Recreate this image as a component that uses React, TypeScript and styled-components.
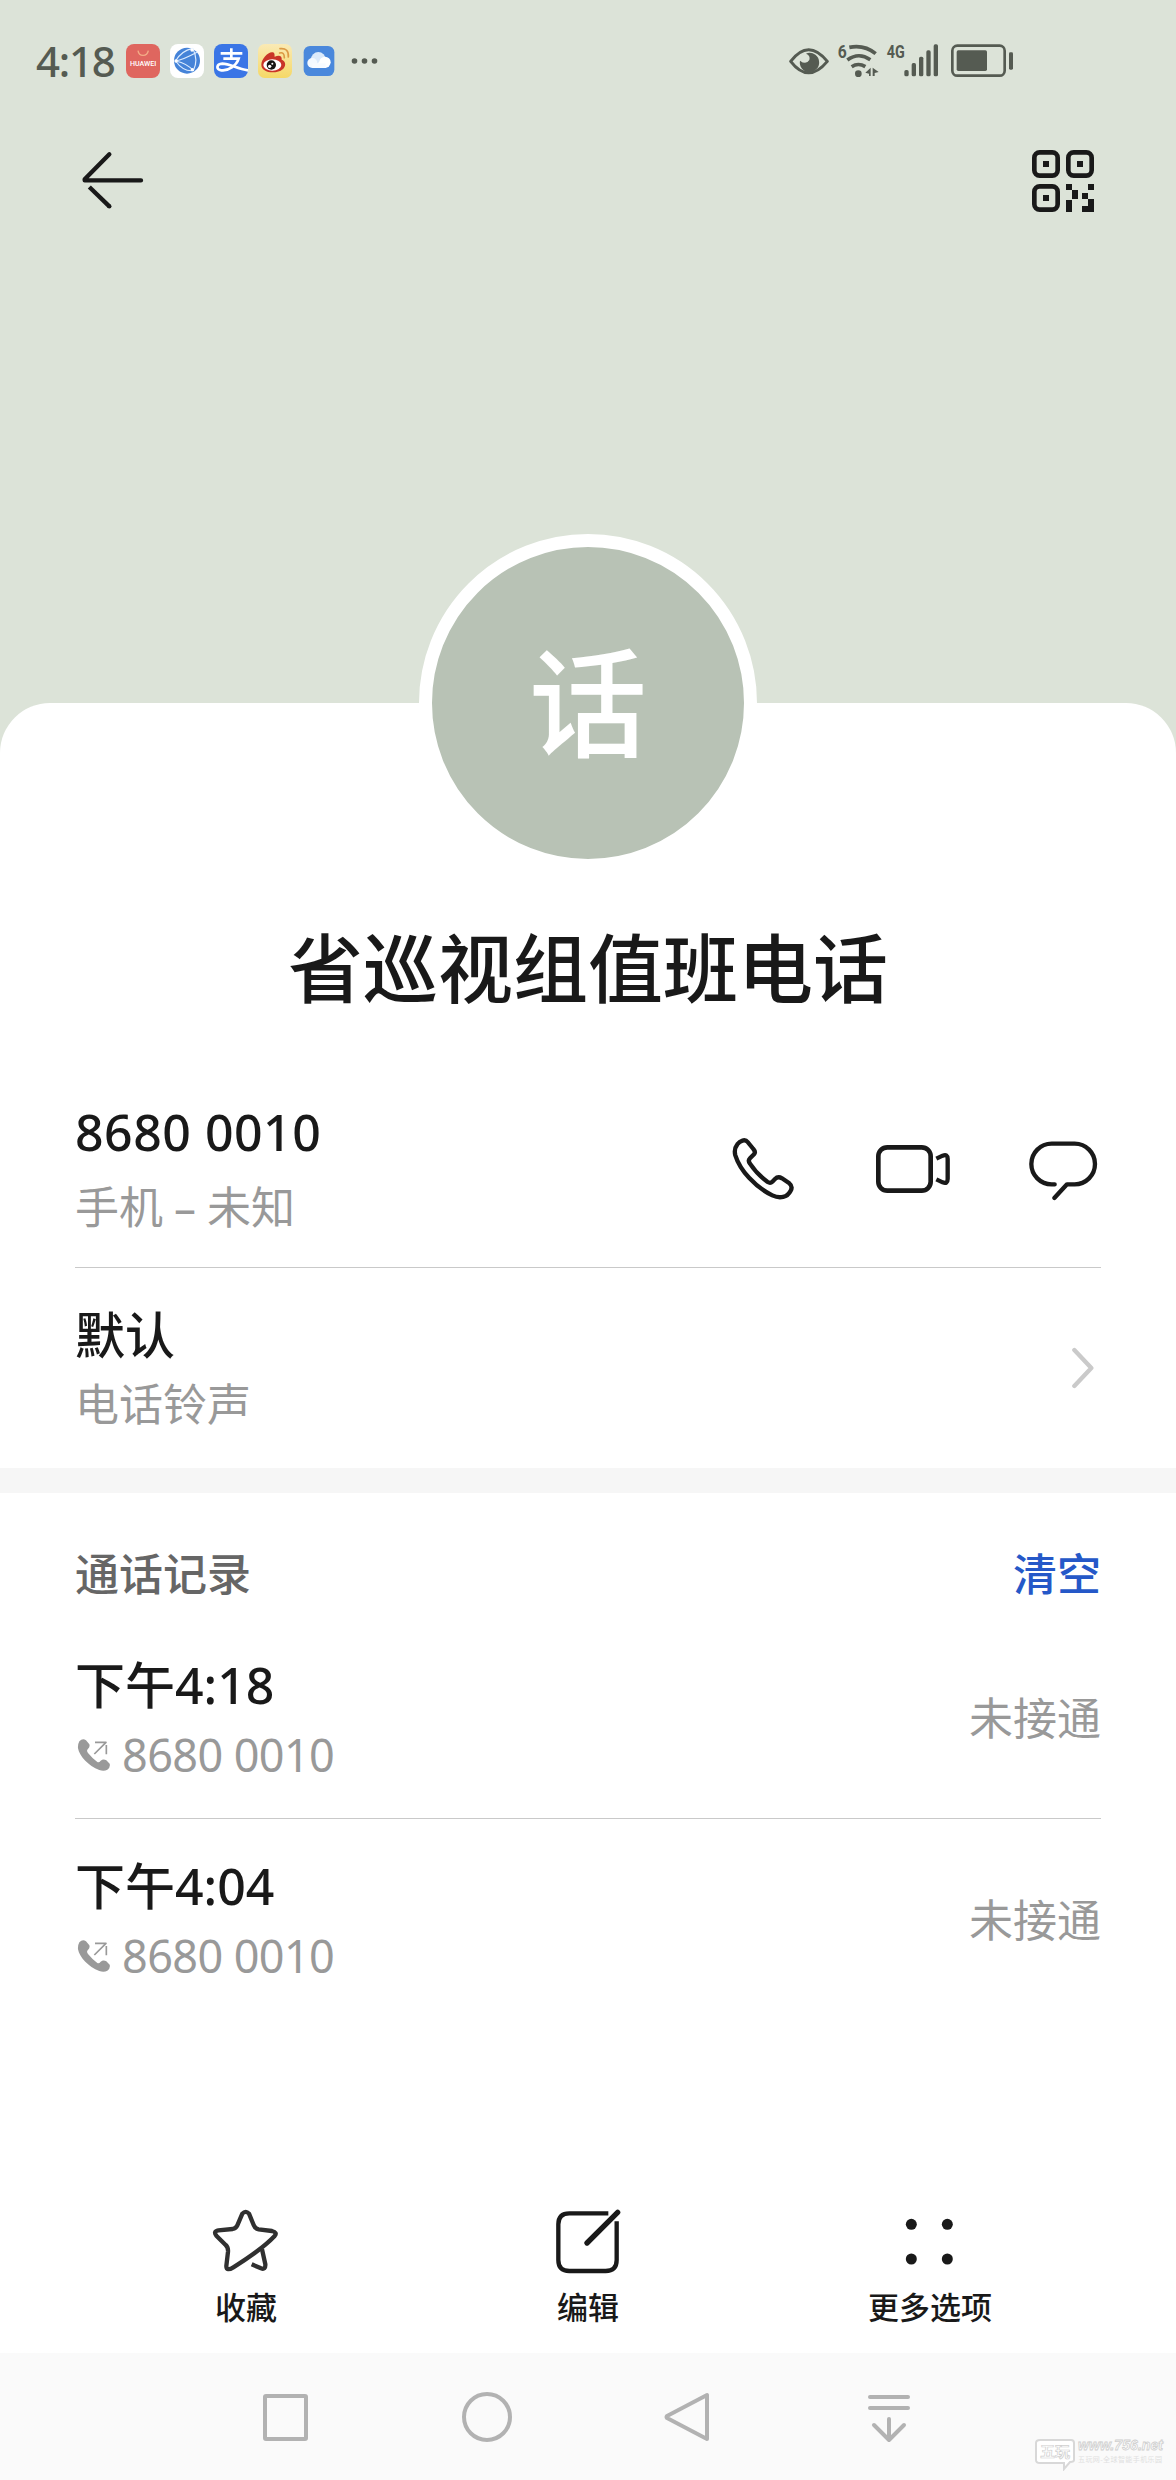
import React from "react";
import styled, { createGlobalStyle } from "styled-components";

const GlobalStyle = createGlobalStyle`
  * { box-sizing: border-box; }
  body { margin: 0; background: #fff; }
`;

const ink = "#191919";
const muted = "#999999";
const statusInk = "#555b52";

const Screen = styled.div`
  display: flex;
  flex-direction: column;
  width: 1176px;
  height: 2480px;
  overflow: hidden;
  background: #dce3d8;
  color: ${ink};
  font-family: "Noto Sans", "Noto Sans CJK SC", sans-serif;
`;

const StatusBar = styled.header`
  display: flex;
  align-items: center;
  height: 122px;
  padding: 0 163px 0 36px;
  color: ${statusInk};
`;

const Clock = styled.time`
  width: 90px;
  font-size: 42px;
  font-weight: 500;
  line-height: 60px;
  letter-spacing: -1.2px;
`;

const AppTray = styled.div`
  display: flex;
  align-items: center;
  gap: 10px;
`;

const SystemTray = styled.div`
  display: flex;
  align-items: center;
  margin-left: auto;
`;

const Toolbar = styled.nav`
  display: flex;
  align-items: center;
  justify-content: space-between;
  height: 118px;
  padding: 0 82px 0 75px;
`;

const IconButton = styled.button`
  display: flex;
  padding: 0;
  border: 0;
  background: none;
  color: ${ink};
`;

const Sheet = styled.main`
  display: flex;
  flex-direction: column;
  flex: 1;
  margin-top: 463px;
  border-radius: 50px 50px 0 0;
  background: #fff;
`;

const Avatar = styled.div`
  display: flex;
  align-items: center;
  justify-content: center;
  align-self: center;
  width: 338px;
  height: 338px;
  margin-top: -169px;
  border: 13px solid #fff;
  border-radius: 50%;
  background: #b8c2b5;
  color: #fff;
  font-size: 118px;
  font-weight: 500;
  line-height: 1;
`;

const ContactName = styled.h1`
  margin: 44px 0 0;
  text-align: center;
  font-size: 75px;
  font-weight: 500;
  line-height: 104px;
`;

const Row = styled.section<{ $height: number; $top?: number; $divided?: boolean }>`
  display: flex;
  align-items: center;
  justify-content: space-between;
  height: ${(p) => p.$height}px;
  margin: 0 75px;
  padding-top: ${(p) => p.$top ?? 0}px;
  border-bottom: ${(p) => (p.$divided ? "1px solid #c9c9c9" : "0")};
`;

const Stack = styled.div<{ $gap?: number }>`
  display: flex;
  flex-direction: column;
  gap: ${(p) => p.$gap ?? 0}px;
`;

const Primary = styled.div<{ $tracking?: number }>`
  font-size: 50px;
  font-weight: 500;
  line-height: 66px;
  letter-spacing: ${(p) => p.$tracking ?? 0}px;
  white-space: nowrap;
`;

const Secondary = styled.div`
  display: flex;
  align-items: center;
  color: ${muted};
  font-size: 44px;
  font-weight: 400;
  line-height: 60px;
  white-space: nowrap;
`;

const Dash = styled.span`
  width: 44px;
  text-align: center;
`;

const Actions = styled.div`
  display: flex;
  gap: 74px;
`;

const ChevronSlot = styled.div`
  padding-right: 7px;
`;

const Band = styled.div`
  height: 25px;
  background: #f6f6f6;
`;

const LogTitle = styled.h2`
  margin: 0;
  color: #666;
  font-size: 44px;
  font-weight: 500;
  line-height: 60px;
`;

const ClearButton = styled.button`
  padding: 0;
  border: 0;
  background: none;
  color: #2558c8;
  font: inherit;
  font-size: 44px;
  font-weight: 500;
  line-height: 60px;
`;

const CallNumber = styled.span`
  margin-left: 11px;
  font-size: 45px;
  letter-spacing: -0.6px;
`;

const BottomBar = styled.footer`
  display: grid;
  grid-template-columns: repeat(3, 1fr);
  height: 150px;
  margin: auto 75px 0;
`;

const Tab = styled.button`
  display: flex;
  flex-direction: column;
  align-items: center;
  padding: 0;
  border: 0;
  background: none;
  color: ${ink};
  font: inherit;
  font-size: 31px;
  font-weight: 500;
  line-height: 42px;
  gap: 7px;
`;

const NavBar = styled.div`
  display: flex;
  align-items: center;
  height: 127px;
  padding-left: 256px;
  gap: 141px;
  background: #fafafa;
`;

const Watermark = styled.div`
  display: flex;
  align-self: flex-end;
  margin-left: -27px;
  padding-bottom: 9px;
`;

const Glyph = styled.svg`
  display: block;
  flex: none;
  fill: none;
  stroke: currentColor;
  stroke-linecap: round;
  stroke-linejoin: round;
`;

const CallGlyph = styled(Glyph)`
  margin-left: 2px;
`;

const AppIcons = () => (
  <AppTray>
    <svg width="34" height="34" viewBox="0 0 102 102">
      <rect width="102" height="102" rx="24" fill="#df665f" />
      <path d="M36 20C39 39 63 39 67 20" fill="none" stroke="#f3ad87" strokeWidth="4" />
      <text x="12" y="66" fill="#fff" fontFamily="Roboto, sans-serif" fontWeight="500" fontSize="20" textLength="79" lengthAdjust="spacingAndGlyphs">HUAWEI</text>
    </svg>
    <svg width="34" height="34" viewBox="450 42 102 102">
      <rect x="450" y="42" width="102" height="102" rx="24" fill="#fff" />
      <circle cx="501" cy="92" r="39" fill="#4583d8" />
      <path d="M518 55C495 60 477 74 467 93C480 112 500 124 520 122M518 55C530 78 530 102 520 122M467 93C490 89 515 75 532 66M467 93C490 98 510 110 520 122" fill="none" stroke="#dcecff" strokeWidth="3.5" />
      <g fill="#fff"><circle cx="516" cy="60" r="5" /><circle cx="468" cy="93" r="5" /><circle cx="517" cy="119" r="5" /></g>
    </svg>
    <svg width="34" height="34" viewBox="582 42 102 102">
      <rect x="582" y="42" width="102" height="102" rx="24" fill="#3a75e6" />
      <path d="M602 70H667M634 55V84M610 86H656C650 106 624 124 604 121C587 118 589 102 607 101C630 101 650 116 684 121" fill="none" stroke="#fff" strokeWidth="8" />
    </svg>
    <svg width="34" height="34" viewBox="714 42 102 102">
      <defs>
        <linearGradient id="sun" x1="0" y1="0" x2="0" y2="1">
          <stop offset="0" stopColor="#faeab5" />
          <stop offset="1" stopColor="#f5d866" />
        </linearGradient>
      </defs>
      <rect x="714" y="42" width="102" height="102" rx="20" fill="url(#sun)" />
      <path d="M724 104C724 88 745 64 758 67C766 69 763 78 764 80C775 75 787 75 785 89C805 96 797 126 760 127C738 127 724 118 724 104Z" fill="#c93428" />
      <ellipse cx="757" cy="105" rx="27" ry="17" fill="#fff" />
      <circle cx="754" cy="105" r="14" fill="#171513" />
      <circle cx="749" cy="109" r="5" fill="#fff" /><circle cx="757" cy="101" r="3" fill="#fff" />
      <path d="M779 69Q793 65 793 83M780 56Q807 53 805 81" fill="none" stroke="#dc9a45" strokeWidth="5" strokeLinecap="round" />
    </svg>
    <svg width="34" height="34" viewBox="846 42 102 102">
      <rect x="851" y="48" width="92" height="90" rx="19" fill="#4a88dc" />
      <circle cx="895" cy="88" r="22" fill="#dceafb" />
      <circle cx="877" cy="99" r="15" fill="#f4f9ff" />
      <circle cx="915" cy="97" r="17" fill="#fff" />
      <path d="M880 114L905 88L918 114Z" fill="#fff" />
      <rect x="877" y="100" width="40" height="14" fill="#f8fbff" />
    </svg>
    <svg width="28" height="8" viewBox="0 0 28 8" style={{ marginLeft: 5 }} fill={statusInk}>
      <circle cx="3.5" cy="4" r="2.8" /><circle cx="13.5" cy="4" r="2.8" /><circle cx="23.5" cy="4" r="2.8" />
    </svg>
  </AppTray>
);

const SystemIcons = () => (
  <SystemTray>
    <svg width="224" height="60" viewBox="57 2 672 180" fill={statusInk}>
      <path d="M62 93Q115 23 172 93Q115 162 62 93Z" fill="none" stroke={statusInk} strokeWidth="9" strokeLinejoin="round" />
      <path d="M113 68A29 29 0 1 1 90 91Q108 105 118 89Q122 75 108 70Z" />
      <g fontFamily="Roboto, sans-serif" fontWeight="700">
        <text x="203" y="82" fontSize="56" textLength="27" lengthAdjust="spacingAndGlyphs">6</text>
        <text x="350" y="83" fontSize="56" textLength="54" lengthAdjust="spacingAndGlyphs">4G</text>
      </g>
      <path d="M238 51Q283 42 317 70M232 89Q266 64 301 88M245 109Q265 96 286 109" fill="none" stroke={statusInk} strokeWidth="11" />
      <circle cx="265" cy="130" r="10" />
      <path d="M302 112V137H297V130L286 127ZM308 112L326 125L314 128V137H308Z" />
      <rect x="403" y="119" width="13" height="19" rx="5" />
      <rect x="425" y="98" width="13" height="40" rx="5" />
      <rect x="447" y="79" width="13" height="59" rx="5" />
      <rect x="469" y="60" width="13" height="78" rx="5" />
      <rect x="491" y="42" width="13" height="96" rx="5" />
      <rect x="547" y="46" width="157" height="90" rx="15" fill="none" stroke={statusInk} strokeWidth="8" />
      <rect x="560" y="60" width="91" height="62" rx="5" />
      <rect x="717" y="66" width="12" height="52" rx="4" />
    </svg>
  </SystemTray>
);

const BackIcon = () => (
  <Glyph width="76" height="76" viewBox="45 39 228 228" strokeWidth="13">
    <path d="M148 73L74 148V151H243" />
    <path d="M148 229L88 171" strokeLinecap="butt" />
    <circle cx="148" cy="229" r="6.5" fill="currentColor" stroke="none" />
  </Glyph>
);

const QrIcon = () => (
  <Glyph width="62" height="62" viewBox="66 60 186 186" strokeWidth="14">
    {[[66, 60], [168, 60], [66, 162]].map(([x, y]) => (
      <g key={`${x}-${y}`}>
        <rect x={x + 7} y={y + 7} width="70" height="70" rx="16" />
        <rect x={x + 33} y={y + 33} width="18" height="18" fill="currentColor" stroke="none" />
      </g>
    ))}
    <path
      d="M168 162h18v18h-18zM234 162h18v18h-18zM186 180h18v27h-18zM216 189h18v18h-18zM168 210h18v36h-18zM234 207h18v39h-36v-18h18z"
      fill="currentColor"
      stroke="none"
    />
  </Glyph>
);

const PhoneIcon = () => (
  <Glyph width="76" height="76" viewBox="75 54 228 228" strokeWidth="13">
    <path d="M112 97C120 86 135 80 143 90L160 111Q168 120 162 127L150 139Q143 146 150 155C165 178 185 197 203 210Q211 215 217 209L225 201Q234 192 246 199L268 214Q279 223 272 236C262 256 240 261 217 250C165 225 120 175 106 130Q101 111 112 97Z" />
  </Glyph>
);

const VideoIcon = () => (
  <Glyph width="76" height="76" viewBox="525 54 228 228" strokeWidth="14">
    <rect x="535" y="106" width="157" height="130" rx="27" />
    <path d="M709 140L728 131Q743 125 743 141V200Q743 217 728 211L709 202" strokeWidth="13" strokeLinecap="butt" />
  </Glyph>
);

const MessageIcon = () => (
  <Glyph width="76" height="76" viewBox="975 54 228 228" strokeWidth="13">
    <path d="M1064 217H1055A61 61 0 0 1 1055 95H1124A61 61 0 0 1 1124 217H1101L1063 258" />
  </Glyph>
);

const ChevronIcon = () => (
  <Glyph width="22" height="42" viewBox="1114 709 66 126" strokeWidth="13" color="#cacaca">
    <path d="M1121 718L1172 772L1121 826" />
  </Glyph>
);

const OutgoingIcon = () => (
  <CallGlyph width="34" height="34" viewBox="51 831 102 102">
    <path
      d="M58 841Q68 830 78 838L88 850Q91 858 83 865Q79 869 84 876Q98 893 112 903Q117 906 122 899Q130 892 139 898L149 908Q152 918 142 926Q132 932 118 927C85 915 58 885 54 862Q53 850 58 841Z"
      fill="currentColor"
      stroke="none"
    />
    <path d="M103 879L138 844H105M139 852V880" strokeWidth="5" strokeLinecap="butt" />
  </CallGlyph>
);

const StarIcon = () => (
  <Glyph width="76" height="76" viewBox="84 39 228 228" strokeWidth="13" color="#303030">
    <path d="M187 71Q197 60 207 71L221 105Q225 116 236 118L276 123Q293 127 284 138C250 174 200 207 160 232Q139 245 139 228L144 185Q145 172 137 165L109 137Q99 124 115 121L158 117Q168 115 172 106Z" />
    <path d="M246 178L256 223Q257 240 243 235L215 223" strokeLinecap="butt" />
  </Glyph>
);

const EditIcon = () => (
  <Glyph width="76" height="76" viewBox="1110 39 228 228" strokeWidth="13">
    <path d="M1285 70H1168Q1135 70 1135 103V210Q1135 243 1168 243H1277Q1310 243 1310 210V94" strokeLinecap="butt" />
    <path d="M1221 159L1313 67" strokeWidth="16" />
  </Glyph>
);

const MoreIcon = () => (
  <Glyph width="76" height="76" viewBox="156 39 228 228">
    <g fill="currentColor" stroke="none">
      <circle cx="214" cy="103" r="16.5" /><circle cx="322" cy="103" r="16.5" />
      <circle cx="214" cy="207" r="16.5" /><circle cx="322" cy="207" r="16.5" />
    </g>
  </Glyph>
);

const NavIcon = ({ children }: { children: React.ReactNode }) => (
  <Glyph width="60" height="60" viewBox="0 0 60 60" strokeWidth="4" color="#b2b2b2">
    {children}
  </Glyph>
);

const calls = [
  { time: "下午4:18", number: "8680 0010", state: "未接通" },
  { time: "下午4:04", number: "8680 0010", state: "未接通" },
];

const tabs = [
  { label: "收藏", icon: <StarIcon /> },
  { label: "编辑", icon: <EditIcon /> },
  { label: "更多选项", icon: <MoreIcon /> },
];

export default function App() {
  return (
    <Screen>
      <GlobalStyle />
      <StatusBar>
        <Clock>4:18</Clock>
        <AppIcons />
        <SystemIcons />
      </StatusBar>
      <Toolbar>
        <IconButton aria-label="返回"><BackIcon /></IconButton>
        <IconButton aria-label="二维码"><QrIcon /></IconButton>
      </Toolbar>
      <Sheet>
        <Avatar>话</Avatar>
        <ContactName>省巡视组值班电话</ContactName>
        <Row $height={248} $top={48} $divided>
          <Stack $gap={12}>
            <Primary $tracking={0.5}>8680 0010</Primary>
            <Secondary>手机<Dash>–</Dash>未知</Secondary>
          </Stack>
          <Actions>
            <IconButton aria-label="拨打"><PhoneIcon /></IconButton>
            <IconButton aria-label="视频"><VideoIcon /></IconButton>
            <IconButton aria-label="信息"><MessageIcon /></IconButton>
          </Actions>
        </Row>
        <Row $height={200}>
          <Stack $gap={6}>
            <Primary>默认</Primary>
            <Secondary>电话铃声</Secondary>
          </Stack>
          <ChevronSlot><ChevronIcon /></ChevronSlot>
        </Row>
        <Band />
        <Row $height={125} $top={37}>
          <LogTitle>通话记录</LogTitle>
          <ClearButton>清空</ClearButton>
        </Row>
        {calls.map((call, i) => (
          <Row key={call.time} $height={201} $divided={i < calls.length - 1}>
            <Stack $gap={7}>
              <Primary>{call.time}</Primary>
              <Secondary>
                <OutgoingIcon />
                <CallNumber>{call.number}</CallNumber>
              </Secondary>
            </Stack>
            <Secondary>{call.state}</Secondary>
          </Row>
        ))}
        <BottomBar>
          {tabs.map((tab) => (
            <Tab key={tab.label}>
              {tab.icon}
              {tab.label}
            </Tab>
          ))}
        </BottomBar>
        <NavBar>
          <NavIcon><rect x="9" y="9" width="41" height="43" rx="1" /></NavIcon>
          <NavIcon><circle cx="30" cy="30" r="23" /></NavIcon>
          <NavIcon><path d="M49 8V52L9 31Q8 30 9 29Z" /></NavIcon>
          <NavIcon>
            <path d="M11 10H49M11 21H49M30 32V52M15 38L30 53L45 38" />
          </NavIcon>
          <Watermark>
            <svg width="136" height="38" viewBox="0 0 136 38">
              <path d="M7 7H38Q41 7 41 10V27Q41 29 37 29L31 36V30H7Q3 30 3 27V10Q3 7 7 7Z" fill="#fff" stroke="#d8d8d8" strokeWidth="2" />
              <text x="7" y="24" fontFamily="Noto Sans CJK SC, sans-serif" fontWeight="700" fontSize="15" fill="#fff" stroke="#cfcfcf" strokeWidth=".7">五玩</text>
              <text x="45" y="17" fontFamily="Liberation Sans, sans-serif" fontStyle="italic" fontWeight="700" fontSize="14" textLength="85" fill="#fff" stroke="#cfcfcf" strokeWidth=".8">www.756.net</text>
              <text x="45" y="29" fontFamily="Noto Sans CJK SC, sans-serif" fontSize="7" textLength="84" fill="#e0e0e0">五玩网-全球智能手机乐园</text>
            </svg>
          </Watermark>
        </NavBar>
      </Sheet>
    </Screen>
  );
}
